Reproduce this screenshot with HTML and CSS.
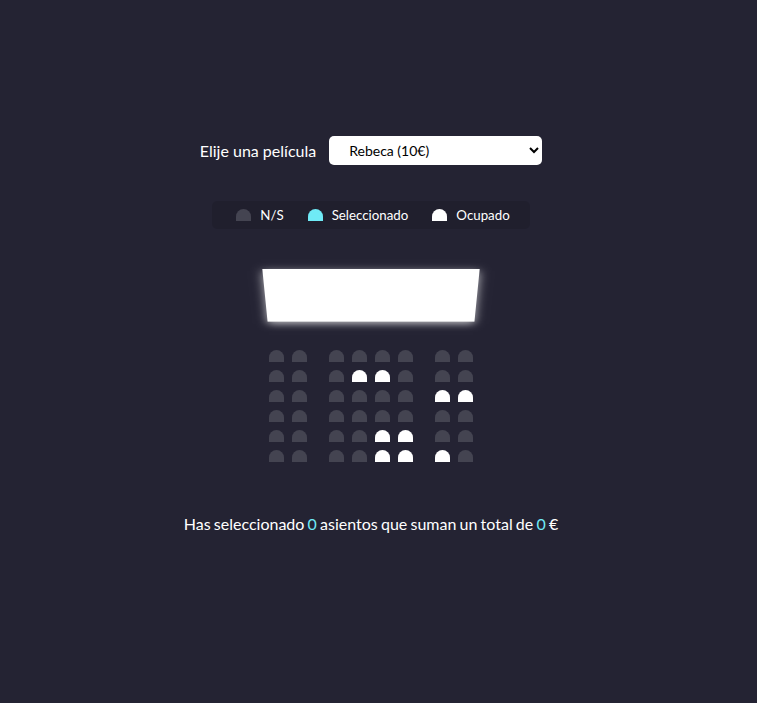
FILE: index.html
```html
<!DOCTYPE html>
<html lang="es">
<head>
<meta charset="UTF-8">
<title>Reserva de asientos</title>
<link rel="stylesheet" href="styles.css">
</head>
<body>
  <div class="movie-container">
    <label for="movie">Elije una película</label>
    <select id="movie">
      <option value="10">Rebeca (10€)</option>
      <option value="12">Psicosis (12€)</option>
      <option value="8">Vértigo (8€)</option>
      <option value="9">Los pájaros (9€)</option>
    </select>
  </div>

  <ul class="showcase">
    <li><div class="seat"></div><small>N/S</small></li>
    <li><div class="seat selected"></div><small>Seleccionado</small></li>
    <li><div class="seat occupied"></div><small>Ocupado</small></li>
  </ul>

  <div class="container">
    <div class="screen"></div>
    <div class="row">
      <div class="seat"></div><div class="seat"></div><div class="seat"></div><div class="seat"></div>
      <div class="seat"></div><div class="seat"></div><div class="seat"></div><div class="seat"></div>
    </div>
    <div class="row">
      <div class="seat"></div><div class="seat"></div><div class="seat"></div><div class="seat occupied"></div>
      <div class="seat occupied"></div><div class="seat"></div><div class="seat"></div><div class="seat"></div>
    </div>
    <div class="row">
      <div class="seat"></div><div class="seat"></div><div class="seat"></div><div class="seat"></div>
      <div class="seat"></div><div class="seat"></div><div class="seat occupied"></div><div class="seat occupied"></div>
    </div>
    <div class="row">
      <div class="seat"></div><div class="seat"></div><div class="seat"></div><div class="seat"></div>
      <div class="seat"></div><div class="seat"></div><div class="seat"></div><div class="seat"></div>
    </div>
    <div class="row">
      <div class="seat"></div><div class="seat"></div><div class="seat"></div><div class="seat"></div>
      <div class="seat occupied"></div><div class="seat occupied"></div><div class="seat"></div><div class="seat"></div>
    </div>
    <div class="row">
      <div class="seat"></div><div class="seat"></div><div class="seat"></div><div class="seat"></div>
      <div class="seat occupied"></div><div class="seat occupied"></div><div class="seat occupied"></div><div class="seat"></div>
    </div>
  </div>

  <p class="text">Has seleccionado <span id="count">0</span> asientos que suman un total de <span id="total">0</span> €</p>
</body>
</html>
```

FILE: styles.css
```css
* {
  box-sizing: border-box;
}

body {
  background-color: #242333;
  color: #fff;
  display: flex;
  flex-direction: column;
  align-items: center;
  height: 100vh;
  margin: 0;
  padding: 116px 15px 0 0;
  font-family: Lato, "Open Sans", sans-serif;
}

.movie-container {
  margin: 20px 0;
  display: flex;
  align-items: center;
  font-size: 16px;
}

.movie-container select {
  background-color: #fff;
  border: 0;
  border-radius: 5px;
  font-family: Lato, sans-serif;
  font-size: 14px;
  color: #000;
  margin-left: 13px;
  padding: 5px 10px 5px 16px;
  width: 213px;
  height: 29px;
}

.showcase {
  background: rgba(0, 0, 0, 0.1);
  padding: 4px 10px;
  margin: 16px 0 17px;
  border-radius: 5px;
  color: #fff;
  list-style-type: none;
  display: flex;
  justify-content: space-between;
}

.showcase li {
  display: flex;
  align-items: center;
  justify-content: center;
  margin: 0 10px;
}

.showcase li small {
  margin-left: 5px;
  font-size: 13.3px;
}

.container {
  perspective: 1000px;
  margin-bottom: 31px;
}

.screen {
  background-color: #fff;
  height: 70px;
  width: 100%;
  margin: 15px 0;
  transform: rotateX(-45deg);
  box-shadow: 0 3px 10px rgba(255, 255, 255, 0.7);
}

.row {
  display: flex;
}

.seat {
  background-color: #444451;
  height: 12px;
  width: 15px;
  margin: 4px;
  border-top-left-radius: 10px;
  border-top-right-radius: 10px;
}

.seat.selected {
  background-color: #6feaf6;
}

.seat.occupied {
  background-color: #fff;
}

.row .seat:nth-of-type(2) {
  margin-right: 18px;
}

.row .seat:nth-last-of-type(2) {
  margin-left: 18px;
}

p.text {
  margin: 17px 0;
  font-size: 16px;
  word-spacing: -0.9px;
}

p.text span {
  color: #6feaf6;
}
```
